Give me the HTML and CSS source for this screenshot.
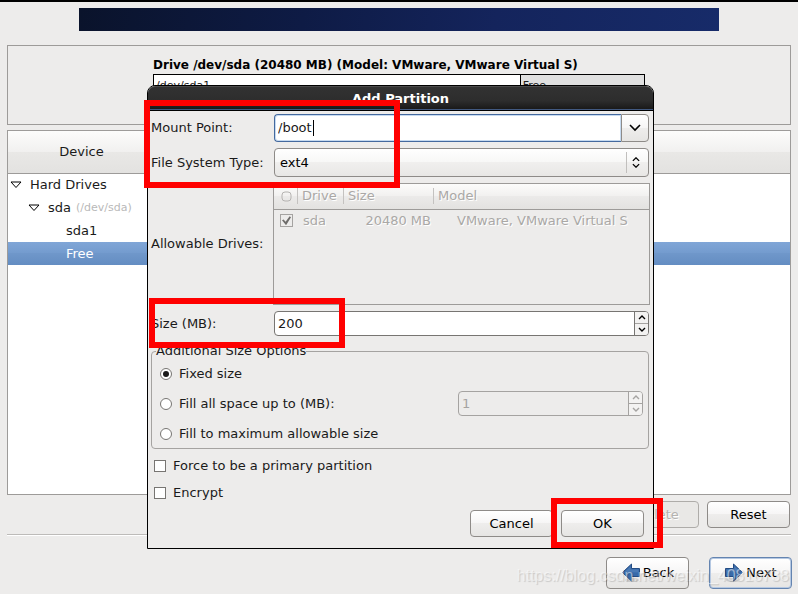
FILE: index.html
```html
<!DOCTYPE html>
<html lang="en">
  <head>
    <meta charset="UTF-8" />
    <meta name="viewport" content="width=device-width, initial-scale=1.0" />
    <title>Add Partition</title>
    <link rel="stylesheet" href="styles.css">
  </head>
  <body>
    <main class="installer">
      <div class="banner"></div>

      <!-- Drive overview -->
      <section class="drive-panel">
        <div class="drive">
          <h2>Drive /dev/sda (20480 MB) (Model: VMware, VMware Virtual S)</h2>
          <div class="drive-map">
            <div class="slice used">/dev/sda1</div>
            <div class="slice free">Free</div>
          </div>
        </div>
      </section>

      <!-- Device tree -->
      <section class="device-panel">
        <table class="device-table">
          <thead>
            <tr><th class="device-col">Device</th><th></th></tr>
          </thead>
          <tbody>
            <tr>
              <td colspan="2"><div class="node"><svg class="expander" viewBox="0 0 12 8"><path d="M1 1h10L6 6.500z" /></svg>Hard Drives</div></td>
            </tr>
            <tr>
              <td colspan="2"><div class="node level-1"><svg class="expander" viewBox="0 0 12 8"><path d="M1 1h10L6 6.500z" /></svg>sda <small>(/dev/sda)</small></div></td>
            </tr>
            <tr>
              <td colspan="2"><div class="node level-2">sda1</div></td>
            </tr>
            <tr class="selected">
              <td colspan="2"><div class="node level-2">Free</div></td>
            </tr>
          </tbody>
        </table>
      </section>

      <div class="toolbar">
        <button type="button" disabled>Delete</button>
        <button type="button">Reset</button>
      </div>

      <hr>

      <nav class="wizard-nav">
        <button type="button">
          <svg class="arrow" viewBox="0 0 20 20">
            <ellipse class="arrow-shadow" cx="11" cy="17" rx="7" ry="2" />
            <path class="arrow-shape" d="M1.500 9.500L10.500 1v4.500h8v8h-8V18z" />
            <path class="arrow-light" d="M3.500 9L9.500 3.500v3h8v3z" />
          </svg>
          Back
        </button>
        <button type="button" class="default">
          <svg class="arrow" viewBox="0 0 20 20">
            <ellipse class="arrow-shadow" cx="9" cy="17" rx="7" ry="2" />
            <path class="arrow-shape" d="M18.500 9.500L9.500 1v4.500h-8v8h8V18z" />
            <path class="arrow-light" d="M16.500 9L10.500 3.500v3h-8v3z" />
          </svg>
          Next
        </button>
      </nav>

      <!-- Add partition dialog -->
      <div class="dialog" role="dialog" aria-labelledby="dialogTitle">
        <h1 id="dialogTitle">Add Partition</h1>
        <form class="dialog-body">
          <div class="fields">
            <label for="mountPoint">Mount Point:</label>
            <div class="combo">
              <input id="mountPoint" type="text" value="/boot">
              <span class="caret"></span>
              <button type="button" aria-label="Show mount points">
                <svg width="12" height="8" viewBox="0 0 12 8"><path d="M1 1l5 5 5-5" /></svg>
              </button>
            </div>

            <label for="fsType">File System Type:</label>
            <div class="select">
              <select id="fsType">
                <option>ext4</option>
              </select>
              <svg class="select-arrows" width="10" height="14" viewBox="0 0 10 14"><path d="M1 5l4-4 4 4M1 9l4 4 4-4" /></svg>
            </div>

            <span class="field-label">Allowable Drives:</span>
            <div class="drive-list">
              <table>
                <thead>
                  <tr>
                    <th class="col-check"><svg width="11" height="11" viewBox="0 0 11 11"><rect x="1" y="1" width="9" height="9" rx="3" /></svg></th>
                    <th class="col-drive">Drive</th>
                    <th class="col-size">Size</th>
                    <th>Model</th>
                  </tr>
                </thead>
                <tbody>
                  <tr>
                    <td class="col-check"><input type="checkbox" aria-label="sda" checked disabled></td>
                    <td class="col-drive">sda</td>
                    <td class="col-size">20480 MB</td>
                    <td class="col-model">VMware, VMware Virtual S</td>
                  </tr>
                </tbody>
              </table>
            </div>

            <label for="size">Size (MB):</label>
            <div class="spin">
              <input id="size" type="text" value="200">
              <div class="spin-buttons">
                <button type="button" aria-label="Increase size"><svg width="8" height="5" viewBox="0 0 8 5"><path d="M1 4l3-3 3 3" /></svg></button>
                <button type="button" aria-label="Decrease size"><svg width="8" height="5" viewBox="0 0 8 5"><path d="M1 1l3 3 3-3" /></svg></button>
              </div>
            </div>
          </div>

          <fieldset>
            <legend>Additional Size Options</legend>
            <div class="option">
              <input id="fixed" type="radio" name="sizeOption" checked>
              <label for="fixed">Fixed size</label>
            </div>
            <div class="option">
              <input id="fillUpTo" type="radio" name="sizeOption">
              <label for="fillUpTo">Fill all space up to (MB):</label>
              <div class="spin disabled">
                <input type="text" value="1" aria-label="Maximum size" disabled>
                <div class="spin-buttons">
                  <button type="button" aria-label="Increase maximum" disabled><svg width="8" height="5" viewBox="0 0 8 5"><path d="M1 4l3-3 3 3" /></svg></button>
                  <button type="button" aria-label="Decrease maximum" disabled><svg width="8" height="5" viewBox="0 0 8 5"><path d="M1 1l3 3 3-3" /></svg></button>
                </div>
              </div>
            </div>
            <div class="option">
              <input id="fillMax" type="radio" name="sizeOption">
              <label for="fillMax">Fill to maximum allowable size</label>
            </div>
          </fieldset>

          <div class="check">
            <input id="primary" type="checkbox">
            <label for="primary">Force to be a primary partition</label>
          </div>
          <div class="check">
            <input id="encrypt" type="checkbox">
            <label for="encrypt">Encrypt</label>
          </div>

          <div class="actions">
            <button type="button">Cancel</button>
            <button type="button">OK</button>
          </div>
        </form>
      </div>

      <!-- Highlights -->
      <div class="mark mark-mount"></div>
      <div class="mark mark-size"></div>
      <div class="mark mark-ok"></div>

      <div class="watermark">https://blog.csdn.net/weixin_40816738</div>
    </main>
  </body>
</html>
```
FILE: styles.css
```css
* {
  box-sizing: border-box;
}

body {
  margin: 0;
  background: #edeceb;
  color: #1a1a1a;
  font-family: "DejaVu Sans", sans-serif;
  font-size: 13px;
  line-height: 16px;
}

h1,
h2 {
  margin: 0;
}

button,
input,
select {
  margin: 0;
  font: inherit;
  color: inherit;
}

button {
  height: 27px;
  padding: 0;
  border: 1px solid #8e8b88;
  border-radius: 4px;
  background: linear-gradient(#ffffff, #f6f5f5 50%, #eeedec 50%, #e6e5e3);
  color: #000;
}

button:disabled {
  border-color: #aeaca9;
  background: #e9e8e6;
  color: #b5b3b0;
  text-shadow: 1px 1px #fff;
}

svg {
  fill: none;
}

/* Installer window */
.installer {
  position: relative;
  min-height: 100vh;
  padding: 6px 7px 4px;
  border-top: 2px solid #000;
}

.banner {
  max-width: 640px;
  height: 23px;
  margin: 0 auto 14px;
  background: linear-gradient(100deg, #0a132b, #0e1b45 35%, #14245c 65%, #172b69);
}

.drive-panel {
  height: 80px;
  margin-bottom: 5px;
  padding-top: 11px;
  border: 1px solid #9d9b99;
}

.drive {
  max-width: 492px;
  margin: 0 auto;
}

.drive h2 {
  color: #000;
  font-size: 12px;
  line-height: 17px;
  white-space: nowrap;
}

.drive-map {
  display: flex;
  height: 40px;
  border: 1px solid #000;
  font-size: 11px;
  line-height: 21px;
}

.slice {
  padding-left: 2px;
}

.used {
  flex: 3;
  background: #fff;
}

.free {
  flex: 1;
  border-left: 1px solid #000;
  background: #e0e0e0;
}

/* Device tree */
.device-panel {
  min-height: 365px;
  border: 1px solid #9d9b99;
  background: #fff;
}

.device-table {
  width: 100%;
  border-collapse: collapse;
}

.device-table th {
  height: 42px;
  padding: 0;
  border-bottom: 1px solid #9d9b99;
  background: linear-gradient(#fcfcfb, #f1f0ef 50%, #e9e8e6 50%, #e3e2e0);
  font-weight: normal;
}

.device-col {
  width: 147px;
}

.device-table td {
  height: 23px;
  padding: 0;
}

.node {
  display: flex;
  align-items: center;
  padding-left: 2px;
}

.level-1 {
  padding-left: 20px;
}

.level-2 {
  padding-left: 58px;
}

.node small {
  margin-left: 5px;
  color: #b9b9b9;
  font-size: 11px;
}

.expander {
  width: 12px;
  height: 8px;
  margin-right: 8px;
  stroke: #000;
}

.selected {
  background: linear-gradient(#80a6d7, #739bce 50%, #6f97ca 50%, #648dc2);
  color: #fff;
}

.toolbar {
  display: flex;
  justify-content: flex-end;
  gap: 8px;
  padding: 6px 1px;
}

.toolbar button,
.actions button,
.wizard-nav button {
  width: 83px;
}

hr {
  margin: 0;
  border: 0;
  border-top: 1px solid #bdbbb9;
  border-bottom: 1px solid #fff;
}

.wizard-nav {
  display: flex;
  justify-content: flex-end;
  gap: 20px;
  margin-right: -1px;
  padding-top: 21px;
}

.wizard-nav button {
  display: flex;
  align-items: center;
  justify-content: center;
  gap: 2px;
  height: 32px;
}

.wizard-nav .default {
  border-color: #6484b0;
  box-shadow: inset 0 0 0 1px #b5c8e2;
}

.arrow {
  width: 20px;
  height: 20px;
}

.arrow-shape {
  fill: #386aa9;
  stroke: #234b83;
}

.arrow-light {
  fill: #4a7ab5;
}

.arrow-shadow {
  fill: #c9c9c9;
}

/* Dialog */
.dialog {
  position: absolute;
  top: 83px;
  left: 147px;
  right: 144px;
  border: 1px solid #000;
  border-radius: 8px 8px 0 0;
  background: #edeceb;
}

.dialog h1 {
  height: 25px;
  border-top: 1px solid #4c4c4c;
  border-bottom: 1px solid #000;
  border-radius: 7px 7px 0 0;
  background: linear-gradient(#323232, #2d2d2d 60%, #171717);
  box-shadow: inset 0 -1px #415981;
  color: #fff;
  font-size: 13px;
  line-height: 24px;
  text-align: center;
}

.dialog-body {
  padding: 3px 4px 11px 3px;
}

.fields {
  display: grid;
  grid-template-columns: 122px 1fr;
  grid-template-rows: 28px 29px 122px 25px;
  gap: 6px 1px;
  align-items: center;
  margin-bottom: 7px;
}

.fields label,
.field-label {
  white-space: nowrap;
}

.combo,
.select,
.spin {
  position: relative;
  display: flex;
  height: 100%;
}

.combo input {
  flex: 1;
  min-width: 0;
  padding: 0 3px;
  border: 1px solid #44699e;
  border-right: 0;
  border-radius: 4px 0 0 4px;
  outline: none;
  background: #fff;
  box-shadow: inset 0 0 0 1px #c6daf0;
}

.combo button {
  width: 28px;
  height: 100%;
  border-radius: 0 4px 4px 0;
}

.combo path,
.select-arrows path {
  stroke: #000;
  stroke-width: 1.6;
}

.caret {
  position: absolute;
  top: 6px;
  left: 39px;
  width: 1px;
  height: 16px;
  background: #000;
}

.select select {
  flex: 1;
  padding: 0 5px;
  border: 1px solid #8e8b88;
  border-radius: 4px;
  appearance: none;
  background: linear-gradient(#ffffff, #f7f7f6 50%, #f0efee 50%, #e8e7e5);
  color: #000;
}

.select-arrows {
  position: absolute;
  top: 4px;
  right: 0;
  width: 23px;
  height: 21px;
  padding: 5px 8px 5px 4px;
  border-left: 1px solid #c1bfbd;
}

.drive-list {
  height: 100%;
  margin: 0 -1px;
  border: 1px solid #9d9b99;
  color: #aaa8a6;
  text-shadow: 1px 1px #fff;
}

.drive-list table {
  width: 100%;
  border-collapse: collapse;
}

.drive-list th {
  height: 25px;
  padding: 0 0 0 4px;
  border-bottom: 1px solid #9d9b99;
  background-image: linear-gradient(#c4c2c0, #c4c2c0), linear-gradient(#fcfcfb, #f1f0ef 50%, #ebeae9 50%, #e3e2e0);
  background-position: right 4px, 0 0;
  background-size: 1px 16px, auto;
  background-repeat: no-repeat;
  font-weight: normal;
  text-align: left;
}

.drive-list th:last-child {
  background: linear-gradient(#fcfcfb, #f1f0ef 50%, #ebeae9 50%, #e3e2e0);
}

.drive-list td {
  height: 23px;
  padding: 0 0 0 5px;
}

.drive-list .col-check {
  width: 24px;
  padding-left: 6px;
}

.drive-list svg {
  display: block;
  margin-left: 1px;
}

.drive-list rect {
  stroke: #b5b3b1;
}

.col-drive {
  width: 46px;
}

.col-size {
  width: 90px;
}

.drive-list td.col-size {
  padding-right: 3px;
  text-align: right;
}

.drive-list td.col-model {
  padding-left: 23px;
}

/* Spin boxes */
.spin {
  border: 1px solid #777572;
  border-radius: 4px;
  background: #fff;
  overflow: hidden;
}

.spin input {
  flex: 1;
  min-width: 0;
  padding: 0 3px;
  border: 0;
  outline: none;
  background: transparent;
}

.spin-buttons {
  display: flex;
  flex-direction: column;
  width: 14px;
  border-left: 1px solid #777572;
}

.spin-buttons button {
  display: flex;
  flex: 1;
  align-items: center;
  justify-content: center;
  height: auto;
  border: 0;
  border-radius: 0;
  background: #f3f2f1;
}

.spin-buttons button + button {
  border-top: 1px solid #a5a3a1;
}

.spin-buttons path {
  stroke: #000;
  stroke-width: 1.4;
}

.spin.disabled,
.disabled .spin-buttons {
  border-color: #a5a3a1;
}

.spin.disabled {
  background: #edeceb;
  color: #a5a3a1;
}

.disabled path {
  stroke: #a5a3a1;
}

/* Size options */
fieldset {
  display: flex;
  flex-direction: column;
  gap: 5px;
  min-width: 0;
  margin: 0;
  padding: 2px 5px 2px 8px;
  border: 1px solid #a5a3a1;
  border-radius: 4px;
}

legend {
  margin-left: -4px;
  padding: 0;
}

.option {
  display: flex;
  align-items: center;
  height: 25px;
}

.option label {
  margin-left: 7px;
}

.option .spin {
  width: 185px;
  margin-left: auto;
}

.check {
  display: flex;
  align-items: center;
  gap: 7px;
  height: 27px;
  padding-left: 3px;
}

fieldset + .check {
  margin-top: 3px;
}

input[type="checkbox"],
input[type="radio"] {
  display: grid;
  place-items: center;
  width: 12px;
  height: 12px;
  border: 1px solid #777572;
  appearance: none;
  background: #fff;
}

input[type="radio"] {
  border-radius: 50%;
}

input[type="radio"]:checked::before {
  content: "";
  width: 6px;
  height: 6px;
  border-radius: 50%;
  background: #1a1a1a;
}

input[type="checkbox"]:disabled {
  width: 13px;
  height: 13px;
  border-color: #a5a3a1;
  background: #edeceb;
}

input[type="checkbox"]:checked::before {
  content: "";
  width: 9px;
  height: 9px;
  background: #6f6d6b;
  clip-path: polygon(0 45%, 18% 35%, 40% 62%, 85% 0, 100% 10%, 45% 100%);
}

.actions {
  display: flex;
  justify-content: flex-end;
  gap: 8px;
  margin-top: 4px;
  padding-right: 5px;
}

/* Highlights */
.mark {
  position: absolute;
  border: 6px solid #f00;
}

.mark-mount {
  top: 98px;
  left: 144px;
  width: 256px;
  height: 88px;
}

.mark-size {
  top: 296px;
  left: 149px;
  width: 196px;
  height: 50px;
}

.mark-ok {
  top: 496px;
  right: 135px;
  width: 112px;
  height: 50px;
}

.watermark {
  position: absolute;
  right: 9px;
  bottom: 9px;
  color: rgba(255, 255, 255, 0.5);
  font-family: "Liberation Sans", sans-serif;
  font-size: 16px;
  line-height: 18px;
  text-shadow: 1px 1px 1px rgba(0, 0, 0, 0.15);
}
```
